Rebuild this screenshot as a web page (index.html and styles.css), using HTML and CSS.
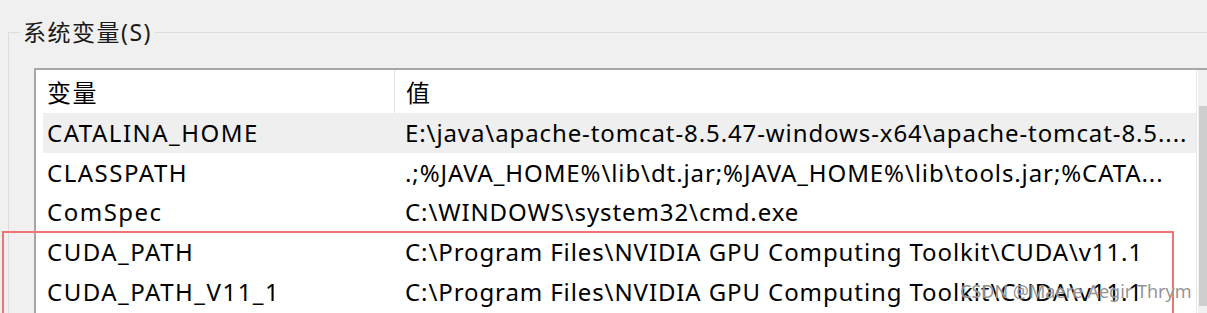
FILE: index.html
```html
<!DOCTYPE html>
<html lang="zh-CN">
<head>
    <meta charset="UTF-8">
    <title>系统变量</title>
    <link rel="stylesheet" href="styles.css">
</head>
<body>
    <fieldset class="group">
        <legend>系统变量(S)</legend>

        <div class="list">
            <div class="grid">
                <div class="head">
                    <div class="cell name">变量</div>
                    <div class="cell value">值</div>
                </div>
                <div class="row selected">
                    <div class="cell name">CATALINA_HOME</div>
                    <div class="cell value">E:\java\apache-tomcat-8.5.47-windows-x64\apache-tomcat-8.5....</div>
                </div>
                <div class="row">
                    <div class="cell name">CLASSPATH</div>
                    <div class="cell value">.;%JAVA_HOME%\lib\dt.jar;%JAVA_HOME%\lib\tools.jar;%CATA...</div>
                </div>
                <div class="row">
                    <div class="cell name">ComSpec</div>
                    <div class="cell value">C:\WINDOWS\system32\cmd.exe</div>
                </div>
                <div class="row">
                    <div class="cell name">CUDA_PATH</div>
                    <div class="cell value">C:\Program Files\NVIDIA GPU Computing Toolkit\CUDA\v11.1</div>
                </div>
                <div class="row">
                    <div class="cell name">CUDA_PATH_V11_1</div>
                    <div class="cell value">C:\Program Files\NVIDIA GPU Computing Toolkit\CUDA\v11.1</div>
                </div>
            </div>
            <div class="scrollbar">
                <div class="thumb"></div>
            </div>
        </div>
    </fieldset>

    <!-- annotation drawn over the screenshot -->
    <div class="mark"></div>
    <div class="watermark">CSDN @Maere Aegir Thrym</div>
</body>
</html>
```

FILE: styles.css
```css
html {
    overflow: hidden;
}
body {
    margin: 0;
    background: #f0f0f0;
    font-family: "Noto Sans", "Noto Sans CJK SC", sans-serif;
    color: #000;
    overflow: hidden;
    height: 313px;
    position: relative;
}
.group {
    margin: 18px 0 0 8px;
    padding: 0;
    border: 1px solid #dcdcdc;
    border-right: none;
    border-bottom: none;
    min-width: 0;
}
.group legend {
    margin-left: 11px;
    padding: 0 3px;
    font-size: 23px;
    line-height: 28px;
    letter-spacing: 1.5px;
    color: #1a1a1a;
}
.list {
    display: flex;
    margin: 22px 0 0 25px;
    height: 245px;
    overflow: hidden;
    background: #fff;
    border-top: 2px solid #a7a7a7;
    border-left: 2px solid #a7a7a7;
}
.grid {
    flex: none;
    width: 1153px;
    padding-left: 7px;
    border-right: 1px solid #e8e8e8;
    font-size: 24px;
    letter-spacing: 0.9px;
}
.head, .row {
    display: flex;
    white-space: nowrap;
}
.head {
    height: 43px;
    align-items: center;
}
.head .name {
    border-right: 1px solid #e5e5e5;
    align-self: stretch;
    display: flex;
    align-items: center;
}
.row {
    height: 39.6px;
    align-items: center;
}
.row.selected {
    background: #efefef;
}
.cell.name {
    flex: none;
    width: 347px;
    padding-left: 4px;
    letter-spacing: 1.5px;
}
.cell.value {
    padding-left: 11px;
    overflow: hidden;
}
.scrollbar {
    flex: none;
    width: 17px;
    margin-left: 1px;
    background: #f0f0f0;
    padding-top: 36px;
}
.thumb {
    height: 200px;
    background: #cdcdcd;
    margin-left: 1px;
}
.mark {
    position: absolute;
    left: 2px;
    top: 231px;
    width: 1168px;
    height: 100px;
    border: 2px solid #f07272;
}
.watermark {
    position: absolute;
    left: 960px;
    top: 279px;
    font-size: 18px;
    color: rgba(110, 110, 110, 0.75);
    text-shadow: 0 0 1px #fff;
}
```
